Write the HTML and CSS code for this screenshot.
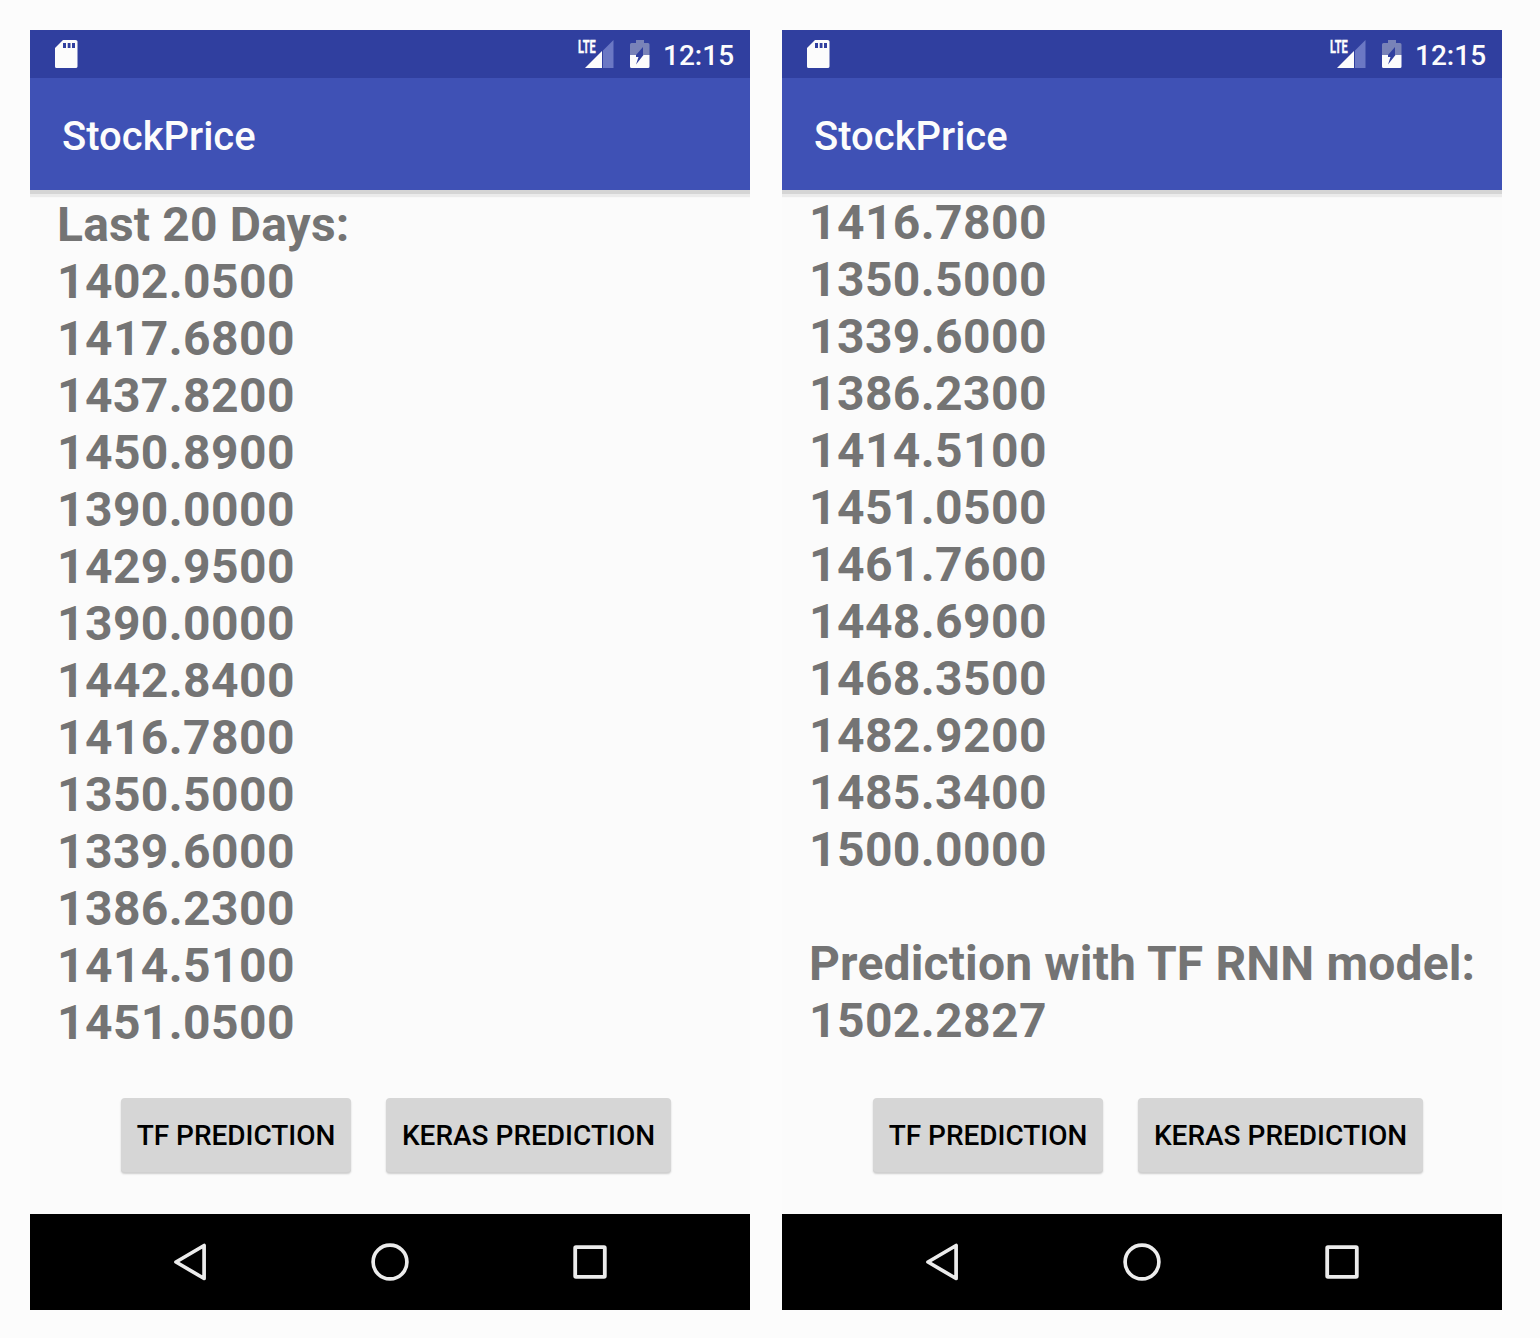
FILE: index.html
```html
<!DOCTYPE html>
<html lang="en">
<head>
<meta charset="utf-8">
<title>StockPrice</title>
<link rel="stylesheet" href="styles.css">
</head>
<body>
<svg class="defs" width="0" height="0" aria-hidden="true">
  <symbol id="sd-card" viewBox="0 0 24 30"><path fill="#fcfcfc" fill-rule="evenodd" d="M9 1H21.500Q23.500 1 23.500 2.500V27.500Q23.500 29 21.500 29H2.500Q1 29 1 27.500V9ZM9 4V9H12V4ZM13.700 4V9H16.500V4ZM18 4V9H21V4Z"/></symbol>
  <symbol id="signal" viewBox="0 0 30 30"><path fill="#6b78c4" d="M28.500 1V29H.500Z"/><path fill="#fcfcfc" d="M17 12V29H0Z"/><path fill="#303f9f" d="M17 10H18V29H17Z"/></symbol>
  <symbol id="battery" viewBox="0 0 20 30"><path fill="#7983b8" d="M6 1H14V4H18Q19.500 4 19.500 5.500V16H13V8L6 16H0V5.500Q0 4 1.500 4H6Z"/><path fill="#fcfcfc" d="M0 16H6V18H8.500L6 25.500L13.500 16H19.500V27.500Q19.500 29 18 29H1.500Q0 29 0 27.500Z"/></symbol>
  <symbol id="back" viewBox="0 0 40 40"><path fill="none" stroke="#ececec" stroke-width="3.700" stroke-linejoin="round" d="M34.100 3.500V36.500L6 20Z"/></symbol>
  <symbol id="home" viewBox="0 0 40 40"><circle cx="20" cy="20" r="16.900" fill="none" stroke="#ececec" stroke-width="3.700"/></symbol>
  <symbol id="recents" viewBox="0 0 40 40"><rect x="5.200" y="5.200" width="29.600" height="29.600" rx=".8" fill="none" stroke="#ececec" stroke-width="3.800"/></symbol>
</svg>
<main class="screens">
  <section class="phone">
    <div class="status">
      <svg class="sd"><use href="#sd-card"/></svg>
      <div class="network"><span class="lte">LTE</span><svg class="signal"><use href="#signal"/></svg></div>
      <svg class="battery"><use href="#battery"/></svg>
      <span class="clock">12:15</span>
    </div>
    <header class="appbar">StockPrice</header>
    <div class="content">
      <div class="log"><span class="label">Last 20 Days:</span>
1402.0500
1417.6800
1437.8200
1450.8900
1390.0000
1429.9500
1390.0000
1442.8400
1416.7800
1350.5000
1339.6000
1386.2300
1414.5100
1451.0500</div>
      <div class="actions"><button class="btn btn-tf">TF PREDICTION</button><button class="btn btn-keras">KERAS PREDICTION</button></div>
    </div>
    <nav class="navbar"><svg><use href="#back"/></svg><svg><use href="#home"/></svg><svg><use href="#recents"/></svg></nav>
  </section>
  <section class="phone">
    <div class="status">
      <svg class="sd"><use href="#sd-card"/></svg>
      <div class="network"><span class="lte">LTE</span><svg class="signal"><use href="#signal"/></svg></div>
      <svg class="battery"><use href="#battery"/></svg>
      <span class="clock">12:15</span>
    </div>
    <header class="appbar">StockPrice</header>
    <div class="content content-end">
      <div class="log">1416.7800
1350.5000
1339.6000
1386.2300
1414.5100
1451.0500
1461.7600
1448.6900
1468.3500
1482.9200
1485.3400
1500.0000

<span class="label">Prediction with TF RNN model:</span>
1502.2827</div>
      <div class="actions"><button class="btn btn-tf">TF PREDICTION</button><button class="btn btn-keras">KERAS PREDICTION</button></div>
    </div>
    <nav class="navbar"><svg><use href="#back"/></svg><svg><use href="#home"/></svg><svg><use href="#recents"/></svg></nav>
  </section>
</main>
</body>
</html>
```
FILE: styles.css
```css
* { box-sizing: border-box; }
body { margin: 0; background: #fcfcfc; font-family: Roboto, sans-serif; }
.defs { display: none; }
.screens { display: flex; gap: 32px; padding: 30px; }
.phone { display: flex; flex-direction: column; flex: none; width: 720px; height: 1280px; background: #fbfbfb; }
.status { display: flex; align-items: center; height: 48px; padding: 0 16px 0 24px; background: #303f9f; color: #fcfcfc; }
.sd { width: 24px; height: 30px; }
.network { position: relative; width: 37px; height: 30px; margin-left: auto; }
.signal { display: block; width: 30px; height: 30px; margin-left: 7px; }
.lte { position: absolute; left: 0; top: 0; font-size: 18px; line-height: 15px; font-weight: 700; transform: scaleX(.61); transform-origin: left; -webkit-text-stroke: .4px #fcfcfc; }
.battery { width: 20px; height: 30px; margin-left: 15px; }
.clock { width: 71px; margin-left: 13px; font-size: 28px; line-height: 48px; font-weight: 500; padding-top: 4px; white-space: nowrap; }
.appbar { position: relative; height: 112px; padding: 3px 32px 0; background: #3f51b5; color: #fcfcfc; font-size: 40px; line-height: 112px; font-weight: 500; box-shadow: 0 4px 0 #d5d5d5, 0 7px 1px #ebebeb; clip-path: inset(0 0 -12px 0); }
.content { display: flex; flex-direction: column; flex: 1; padding: 6px 27px 0; }
.content-end { padding-top: 4px; }
.log { height: 902px; color: #747474; font-size: 48px; line-height: 57px; font-weight: 700; letter-spacing: .4px; white-space: pre; }
.content-end .log { height: 904px; }
.label { letter-spacing: .16px; }
.actions { display: flex; gap: 35px; padding-left: 64px; }
.btn { height: 74px; border: 0; border-radius: 4px; padding: 2px 0 0; background: #d6d6d6; color: #000; font: 500 28px/72px Roboto, sans-serif; white-space: nowrap; box-shadow: 0 1px 0 #d0d0d0, 0 2px 2px #ccc; }
.btn-tf { width: 230px; letter-spacing: -.04px; }
.btn-keras { width: 285px; }
.navbar { display: flex; align-items: center; gap: 160px; height: 96px; padding-left: 140px; background: #000; }
.navbar svg { width: 40px; height: 40px; }
```
